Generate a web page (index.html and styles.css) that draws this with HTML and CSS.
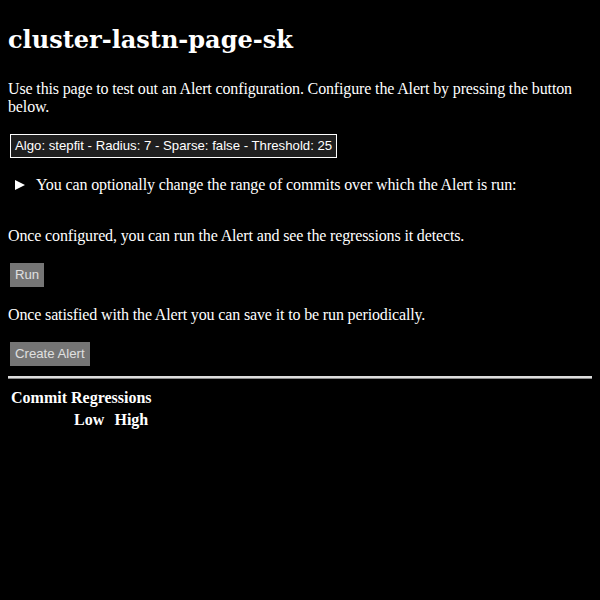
FILE: index.html
```html
<!DOCTYPE html>
<html>
<head>
<meta charset="utf-8">
<link rel="stylesheet" href="styles.css">
</head>
<body>
<h1 class="title">cluster-lastn-page-sk</h1>
<p class="text">Use this page to test out an Alert configuration. Configure the Alert by pressing the button below.</p>
<button class="config">Algo: stepfit - Radius: 7 - Sparse: false - Threshold: 25</button>
<details class="range">
  <summary class="summary">You can optionally change the range of commits over which the Alert is run:</summary>
</details>
<p class="text">Once configured, you can run the Alert and see the regressions it detects.</p>
<button class="action">Run</button>
<p class="text">Once satisfied with the Alert you can save it to be run periodically.</p>
<button class="action">Create Alert</button>
<hr class="rule">
<table class="regressions">
  <tr><th>Commit</th><th colspan="2">Regressions</th></tr>
  <tr><th></th><th>Low</th><th>High</th></tr>
</table>
</body>
</html>
```

FILE: styles.css
```css
html, body {
  background: #000;
  color: #fff;
}
body {
  margin: 8px;
  font-family: "Liberation Serif", serif;
  font-size: 16px;
}
.title {
  font-family: "DejaVu Serif", serif;
  font-size: 24px;
  line-height: 28px;
  font-weight: bold;
  margin: 18px 0 26px;
}
.text {
  margin: 19px 0 16px;
  letter-spacing: -0.14px;
}
.config {
  display: block;
  margin: 18px 2px;
  font-family: "Liberation Sans", sans-serif;
  font-size: 13.2px;
  line-height: 16px;
  height: 24px;
  color: #fff;
  background: #1f1f1f;
  border: 1px solid #fff;
  padding: 3px 4px;
}
.range {
  margin: 16px 0 33px;
}
.summary {
  display: flex;
  align-items: center;
  list-style: none;
  padding-left: 7px;
  letter-spacing: -0.12px;
}
.summary::-webkit-details-marker {
  display: none;
}
.summary::before {
  content: "";
  width: 0;
  height: 0;
  border-top: 5.5px solid transparent;
  border-bottom: 5.5px solid transparent;
  border-left: 10px solid #fff;
  margin-right: 11px;
}
.action {
  display: block;
  margin: 18px 2px 10px;
  font-family: "Liberation Sans", sans-serif;
  font-size: 13.2px;
  line-height: 16px;
  height: 24px;
  color: #e0e0e0;
  background: #757575;
  border: none;
  padding: 4px 5px;
}
.rule {
  border: none;
  border-top: 2px solid #ddd;
  height: 1px;
  background: #888;
  margin: 10px 0 7px;
}
```
